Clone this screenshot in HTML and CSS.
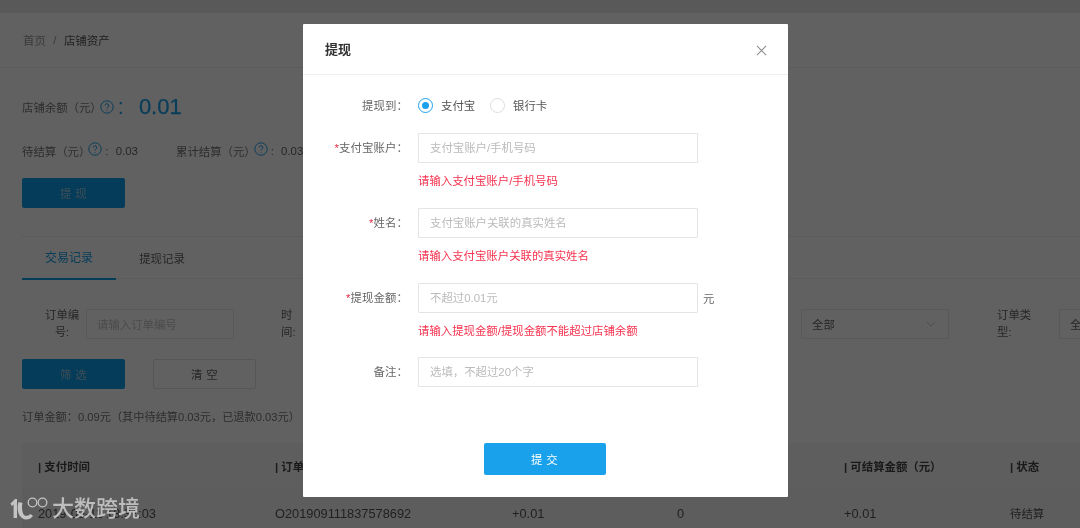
FILE: index.html
```html
<!DOCTYPE html>
<html lang="zh-CN">
<head>
<meta charset="utf-8">
<title>店铺资产</title>
<link rel="stylesheet" href="styles.css">
</head>
<body>
<div class="page">
  <div class="topbar"></div>
  <nav class="crumbs"><span class="crumb-home">首页</span><span class="crumb-sep">/</span><span class="crumb-now">店铺资产</span></nav>
  <main class="content">
    <div class="balance">
      <span>店铺余额（元）</span>
      <svg class="help help-big" viewBox="0 0 14 14"><circle cx="7" cy="7" r="6.2"/><path d="M5.2 5.6a1.8 1.8 0 1 1 2.7 1.5c-.6.4-.9.7-.9 1.4"/><path d="M7 10v.8"/></svg>
      <span class="balance-colon">:</span>
      <span class="balance-num">0.01</span>
    </div>
    <div class="stats">
      <div class="stat"><span>待结算（元）</span><svg class="help" viewBox="0 0 14 14"><circle cx="7" cy="7" r="6.2"/><path d="M5.2 5.6a1.8 1.8 0 1 1 2.7 1.5c-.6.4-.9.7-.9 1.4"/><path d="M7 10v.8"/></svg><span class="stat-val">: 0.03</span></div>
      <div class="stat"><span>累计结算（元）</span><svg class="help" viewBox="0 0 14 14"><circle cx="7" cy="7" r="6.2"/><path d="M5.2 5.6a1.8 1.8 0 1 1 2.7 1.5c-.6.4-.9.7-.9 1.4"/><path d="M7 10v.8"/></svg><span class="stat-val">: 0.03</span></div>
    </div>
    <button class="btn btn-primary">提 现</button>
    <div class="tabs">
      <span class="tab tab-active">交易记录</span>
      <span class="tab">提现记录</span>
    </div>
    <div class="filters">
      <label class="f-label f-label-first">订单编<br>号:</label>
      <div class="f-input f-placeholder">请输入订单编号</div>
      <label class="f-label f-label-time">时<br>间:</label>
      <div class="f-input f-date"></div>
      <div class="f-input f-select">全部<svg class="chev" viewBox="0 0 12 7"><path d="M1 1l5 5 5-5"/></svg></div>
      <label class="f-label f-label-type">订单类<br>型:</label>
      <div class="f-input f-select f-last">全部</div>
    </div>
    <div class="actions">
      <button class="btn btn-primary">筛 选</button>
      <button class="btn btn-ghost">清 空</button>
    </div>
    <p class="summary">订单金额：0.09元（其中待结算0.03元，已退款0.03元）</p>
    <div class="table">
      <div class="t-row t-head">
        <span>| 支付时间</span><span>| 订单编号</span><span></span><span></span><span>| 可结算金额（元）</span><span>| 状态</span>
      </div>
      <div class="t-row t-body">
        <span>2019-09-11 18:37:03</span><span>O201909111837578692</span><span>+0.01</span><span>0</span><span>+0.01</span><span class="t-status">待结算</span>
      </div>
    </div>
  </main>
  <div class="overlay"></div>
  <section class="modal">
    <header class="m-head">
      <h2 class="m-title">提现</h2>
      <svg class="m-close" viewBox="0 0 12 12"><path d="M1 1l10 10M11 1L1 11"/></svg>
    </header>
    <form class="m-form">
      <div class="m-row m-row-radio">
        <span class="m-label">提现到：</span>
        <div class="radios">
          <span class="radio radio-on"></span><span class="radio-text">支付宝</span>
          <span class="radio"></span><span class="radio-text">银行卡</span>
        </div>
      </div>
      <div class="m-row">
        <span class="m-label"><i class="req">*</i>支付宝账户：</span>
        <div class="m-input">支付宝账户/手机号码</div>
        <p class="m-error">请输入支付宝账户/手机号码</p>
      </div>
      <div class="m-row">
        <span class="m-label"><i class="req">*</i>姓名：</span>
        <div class="m-input">支付宝账户关联的真实姓名</div>
        <p class="m-error">请输入支付宝账户关联的真实姓名</p>
      </div>
      <div class="m-row m-row-amount">
        <span class="m-label"><i class="req">*</i>提现金额：</span>
        <div class="m-input">不超过0.01元</div>
        <span class="m-unit">元</span>
        <p class="m-error">请输入提现金额/提现金额不能超过店铺余额</p>
      </div>
      <div class="m-row">
        <span class="m-label">备注：</span>
        <div class="m-input">选填，不超过20个字</div>
      </div>
    </form>
    <div class="m-foot"><button class="m-submit">提 交</button></div>
  </section>
  <div class="mark">
    <svg class="mark-logo" viewBox="0 0 38 24">
      <path class="ml-fill" d="M0.5 6.5L5 2h2v19H3.6V7.6L1.8 9z"/>
      <path class="ml-fill" d="M8.5 5C6.5 12 8 18 12 21c4 3 8 1.5 11-2l-2.5-2c-2.5 2-5 2.5-6.5 1-2-2.5-2.5-8-1.5-12z"/>
      <circle class="ml-ring" cx="22.5" cy="5.5" r="4.3"/>
      <circle class="ml-ring" cx="32.5" cy="5.5" r="4.3"/>
    </svg>
    <span class="mark-text">大数跨境</span>
  </div>
</div>
</body>
</html>
```
FILE: styles.css
```css
* { box-sizing: border-box; }
html, body { margin: 0; padding: 0; }
body { font-family: "Liberation Sans", "Noto Sans CJK SC", sans-serif; font-size: 11.4px; color: #666; }

.page { position: relative; width: 1080px; height: 528px; overflow: hidden; background: #fff; filter: blur(.35px); }
.topbar { height: 13px; background: #e9e9e9; }
.crumbs { height: 55px; padding-left: 23px; display: flex; align-items: center; border-bottom: 1px solid #f0f0f0; }
.crumb-home { color: #999; }
.crumb-sep { margin: 0 7.5px; color: #999; }
.crumb-now { color: #555; }

.content { padding: 0 0 0 22px; width: 1080px; }
.balance { display: flex; align-items: center; height: 28px; margin-top: 25px; color: #777; }
.help { width: 14px; height: 14px; fill: none; stroke: #1aa1ec; stroke-width: 1; margin-left: -2px; flex: none; position: relative; top: -2px; }
.help-big { top: 0; margin-left: -2px; }
.balance-colon { font-size: 22px; color: #1aa1ec; margin-left: 4px; }
.balance-num { font-size: 22px; color: #1aa1ec; margin-left: 15px; -webkit-text-stroke: .25px #1aa1ec; }

.stats { display: flex; margin-top: 21px; height: 18px; align-items: center; color: #777; }
.stat { display: flex; align-items: center; width: 154px; white-space: nowrap; }
.stat-val { margin-left: 3px; color: #666; word-spacing: 4px; }

.btn { display: block; width: 103px; height: 30px; border-radius: 2px; font: inherit; letter-spacing: .4px; cursor: pointer; }
.btn-primary { background: #0f9fe9; border: 0; color: #9fc9e0; }
.stats + .btn { margin-top: 18px; }
.btn-ghost { background: #fff; border: 1px solid #e2e2e2; color: #666; }

.tabs { display: flex; height: 43px; margin-top: 28px; border-top: 1px solid #eee; border-bottom: 1px solid #eee; width: 1058px; }
.tab { display: flex; align-items: center; justify-content: center; color: #666; width: 94px; }
.tab-active { color: #1aa1ec; border-bottom: 2px solid #0f9fe9; height: 43px; font-size: 12px; padding-bottom: 3px; }
.tab + .tab { width: 92px; padding-bottom: 0; }

.filters { display: flex; align-items: center; height: 30px; margin-top: 30px; white-space: nowrap; }
.f-label { line-height: 17px; color: #666; flex: none; }
.f-label-first { width: 34px; margin-left: 23px; margin-right: 7px; text-align: center; }
.f-label-time { width: 22px; margin-left: 47px; }
.f-label-type { width: 34px; margin-left: 48px; margin-right: 28px; }
.f-input { width: 148px; height: 30px; border: 1px solid #eaeaea; padding-left: 10px; display: flex; align-items: center; background: #fff; flex: none; }
.f-placeholder { color: #c4c4c4; }
.f-date { width: 470px; margin-right: 28px; }
.f-select { position: relative; color: #666; }
.chev { position: absolute; right: 12px; top: 11px; width: 10px; height: 6px; fill: none; stroke: #bbb; stroke-width: 1; }

.actions { display: flex; gap: 28px; margin-top: 20px; }
.summary { margin: 20px 0 0; height: 17px; line-height: 17px; color: #777; font-size: 11.2px; }

.table { margin-top: 17px; }
.t-row { display: grid; grid-template-columns: 237px 237px 165px 167px 166px 86px; }
.t-row span { padding-left: 16px; white-space: nowrap; }
.t-head { height: 47px; padding-bottom: 1px; align-items: center; background: #f8f8f8; font-weight: 700; color: #444; border-bottom: 1px solid #eee; }
.t-body { height: 46px; align-items: center; color: #555; font-size: 12.8px; background: #f4f4f4; }
.t-row .t-status { font-size: 11.4px; }

.overlay { position: absolute; inset: 0; background: rgba(0,0,0,.62); }

.modal { position: absolute; left: 303px; top: 24px; width: 485px; height: 473px; background: #fff; border-radius: 1px; }
.m-head { height: 51px; display: flex; align-items: center; justify-content: space-between; padding: 0 21px 2px 22px; border-bottom: 1px solid #eee; }
.m-title { margin: 0; font-size: 13px; font-weight: 700; color: #333; }
.m-close { width: 11px; height: 11px; fill: none; stroke: #8a8a8a; stroke-width: 1.1; position: relative; top: 2px; }
.m-form { padding: 20px 0 0; }
.m-row { display: grid; grid-template-columns: 105px 280px auto; column-gap: 10px; align-items: center; margin-bottom: 18px; }
.m-row-radio { height: 20px; }
.m-row-amount { margin-bottom: 17px; }
.m-label { text-align: right; color: #666; white-space: nowrap; letter-spacing: .1px; padding-bottom: 2px; }
.m-row-radio .m-label { padding-bottom: 0; }
.req { color: #e8324a; font-style: normal; }
.radios { display: flex; align-items: center; }
.radio { width: 15px; height: 15px; border: 1px solid #ddd; border-radius: 50%; display: block; flex: none; position: relative; }
.radio-on { border-color: #1aa1ec; }
.radio-on::after { content: ""; position: absolute; left: 3px; top: 3px; width: 7px; height: 7px; border-radius: 50%; background: #1aa1ec; }
.radio-text { margin: 0 15px 0 8px; color: #555; width: 34px; white-space: nowrap; }
.m-input { height: 30px; border: 1px solid #e4e4e4; border-radius: 1px; color: #bbb; padding: 0 0 2px 11px; display: flex; align-items: center; }
.m-unit { color: #666; margin-left: -5px; }
.m-error { grid-column: 2 / 4; margin: 9px 0 0; height: 18px; line-height: 18px; color: #f5334f; }
.m-foot { display: flex; justify-content: center; position: absolute; left: 0; right: 2px; bottom: 22px; }
.m-submit { width: 122px; height: 32px; border: 0; border-radius: 2px; background: #1aa1ec; color: #fff; font: inherit; letter-spacing: .4px; }

.mark { position: absolute; left: 10px; top: 496px; display: flex; align-items: center; height: 25px; }
.mark-logo { width: 38px; height: 24px; flex: none; }
.ml-fill { fill: #c4c4c4; }
.ml-ring { fill: none; stroke: #c4c4c4; stroke-width: 1.3; }
.mark-text { margin-left: 4px; font-size: 22px; font-weight: 500; color: #bdbdbd; line-height: 25px; white-space: nowrap; }
```
